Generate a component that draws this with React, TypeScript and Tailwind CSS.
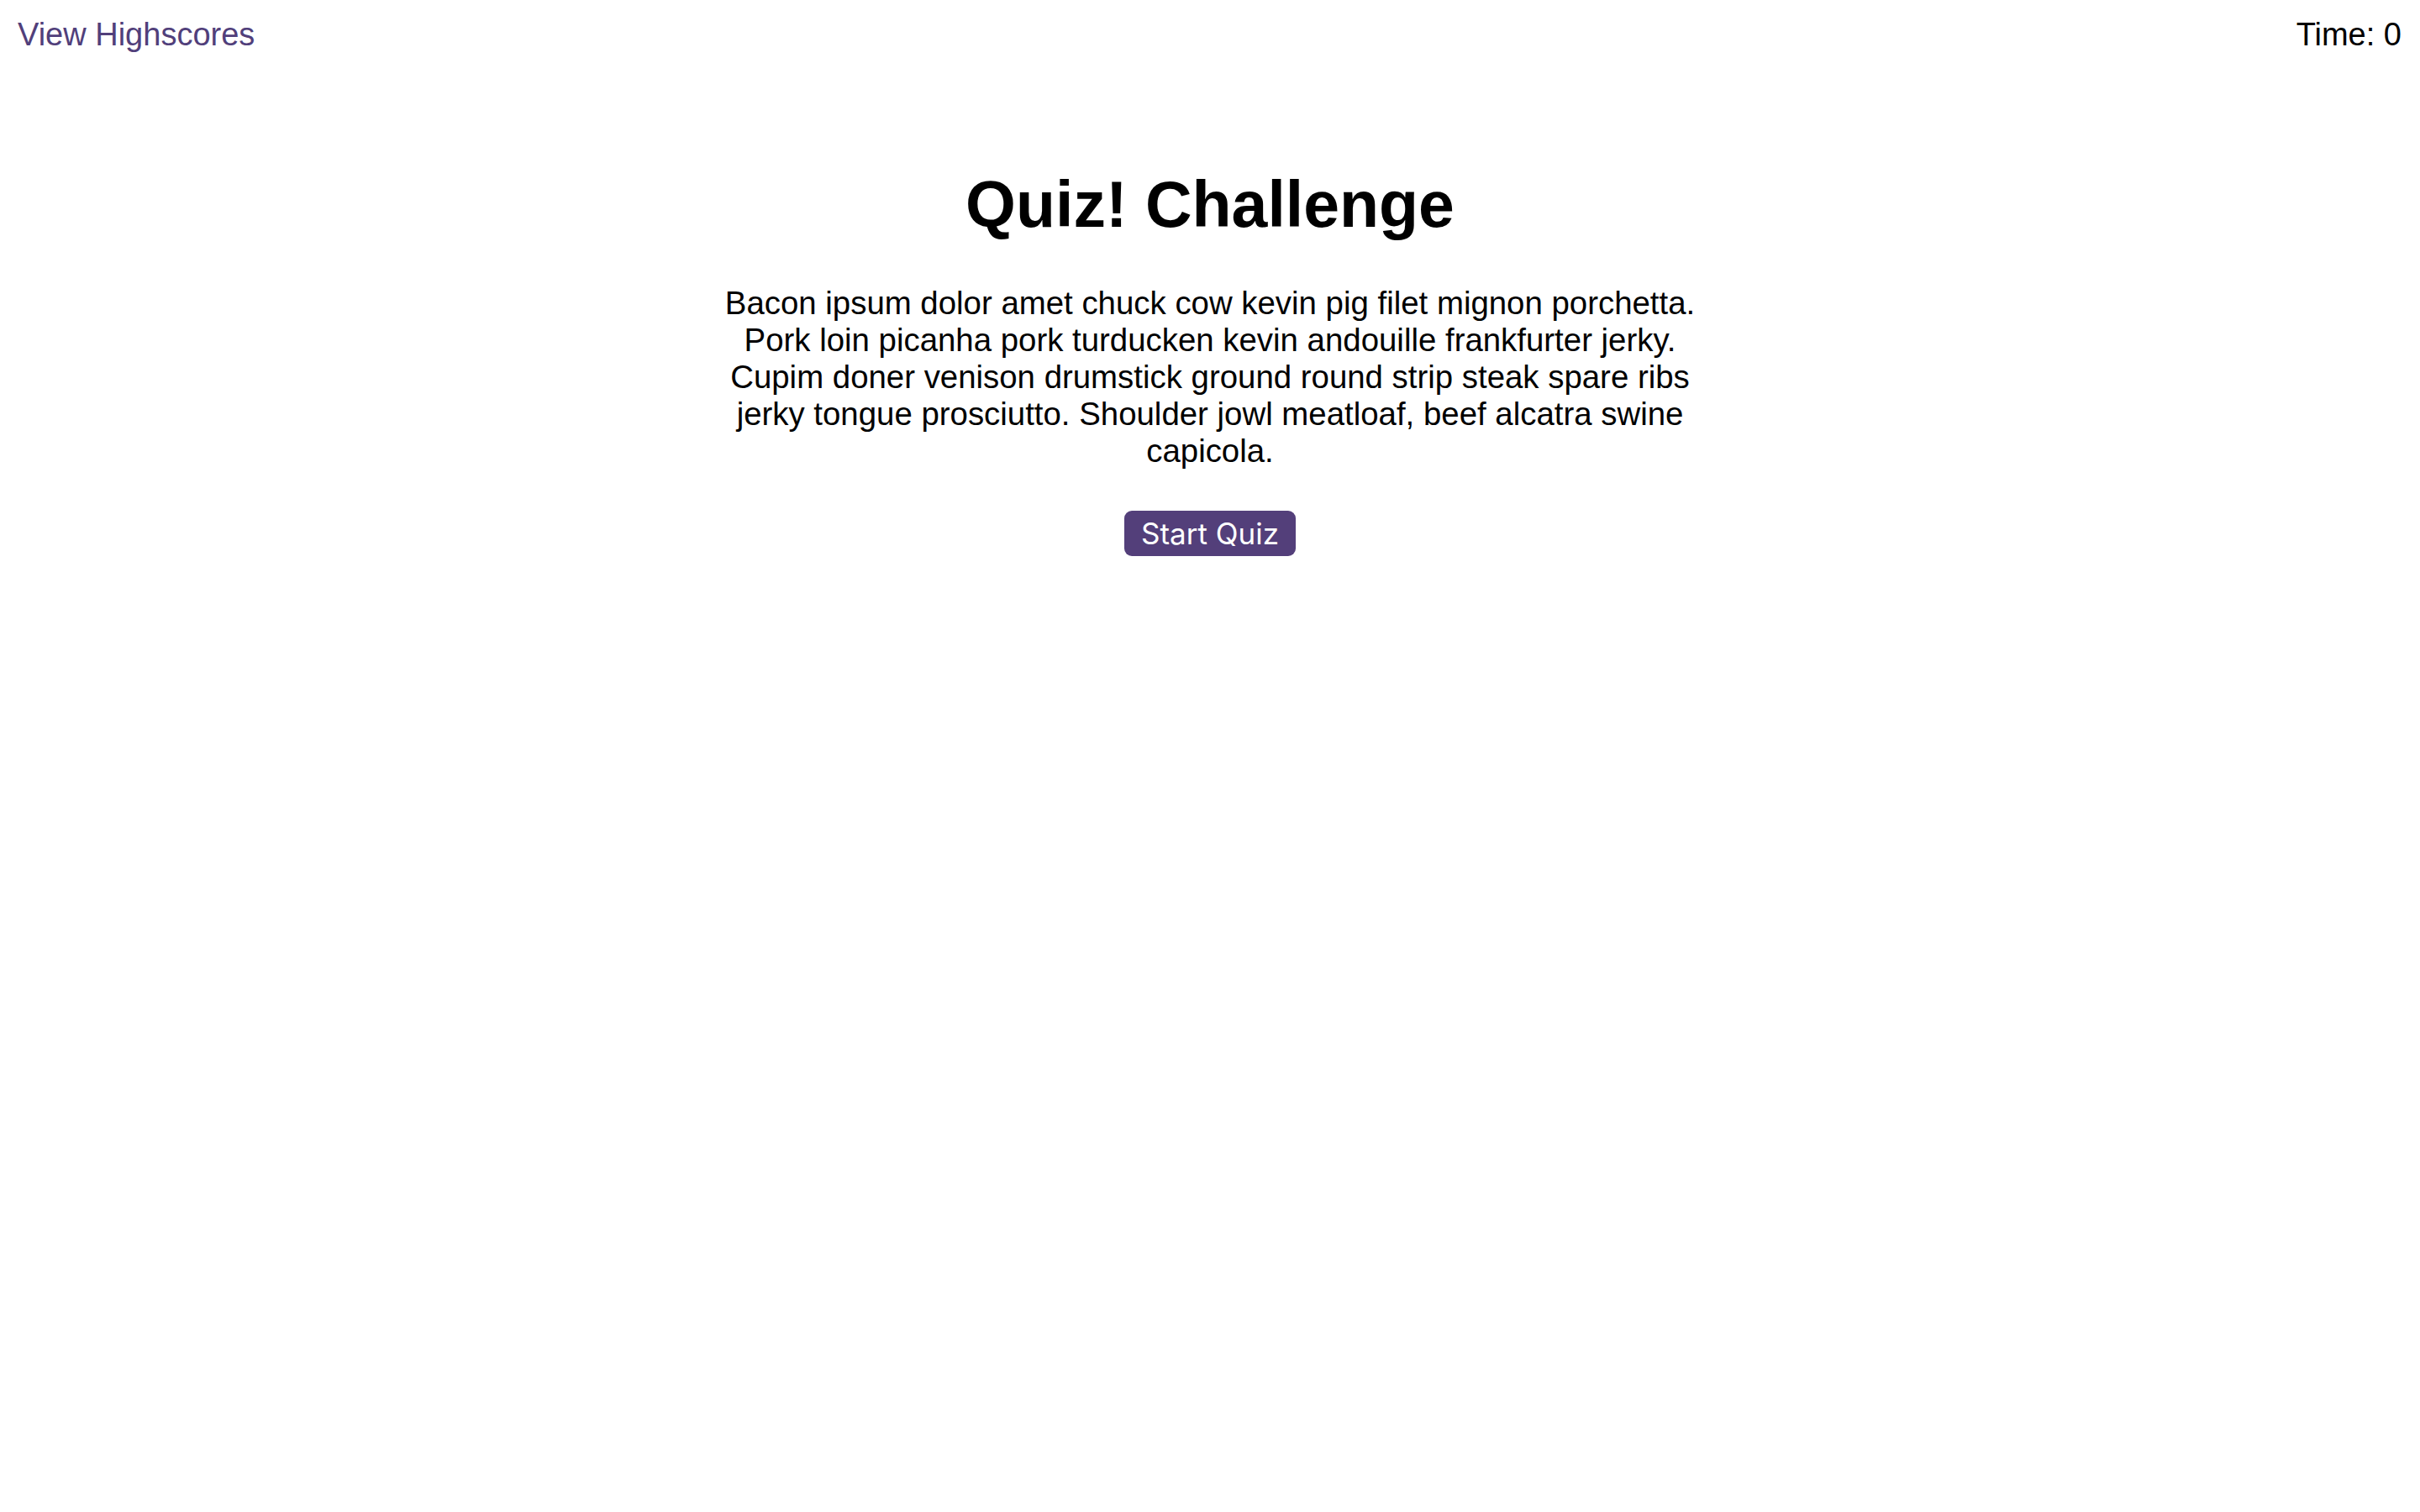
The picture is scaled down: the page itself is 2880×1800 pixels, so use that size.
export default function App() {
  return (
    <div className="min-h-screen bg-white text-black [font-family:'Liberation_Sans',Arial,sans-serif]">
      {/* Header */}
      <header className="flex items-start justify-between pl-[21px] pr-[22px] pt-[19px] text-[38px] leading-[44px]">
        <a href="#" className="text-[#513f7b]">
          View Highscores
        </a>
        <span>Time: 0</span>
      </header>

      {/* Intro */}
      <main className="flex flex-col items-center">
        <h1 className="mt-[136px] text-[77px] font-bold leading-[88px]">
          Quiz! Challenge
        </h1>
        <p className="mt-[52px] w-[1200px] text-center text-[38.4px] leading-[44px]">
          Bacon ipsum dolor amet chuck cow kevin pig filet mignon porchetta.
          Pork loin picanha pork turducken kevin andouille frankfurter jerky.
          Cupim doner venison drumstick ground round strip steak spare ribs
          jerky tongue prosciutto. Shoulder jowl meatloaf, beef alcatra swine
          capicola.
        </p>
        <button className="mt-[49px] flex h-[54px] w-[204px] items-center justify-center rounded-[9px] bg-[#533f7a] text-[35px] text-white [font-family:Inter,sans-serif]">
          Start Quiz
        </button>
      </main>
    </div>
  );
}
